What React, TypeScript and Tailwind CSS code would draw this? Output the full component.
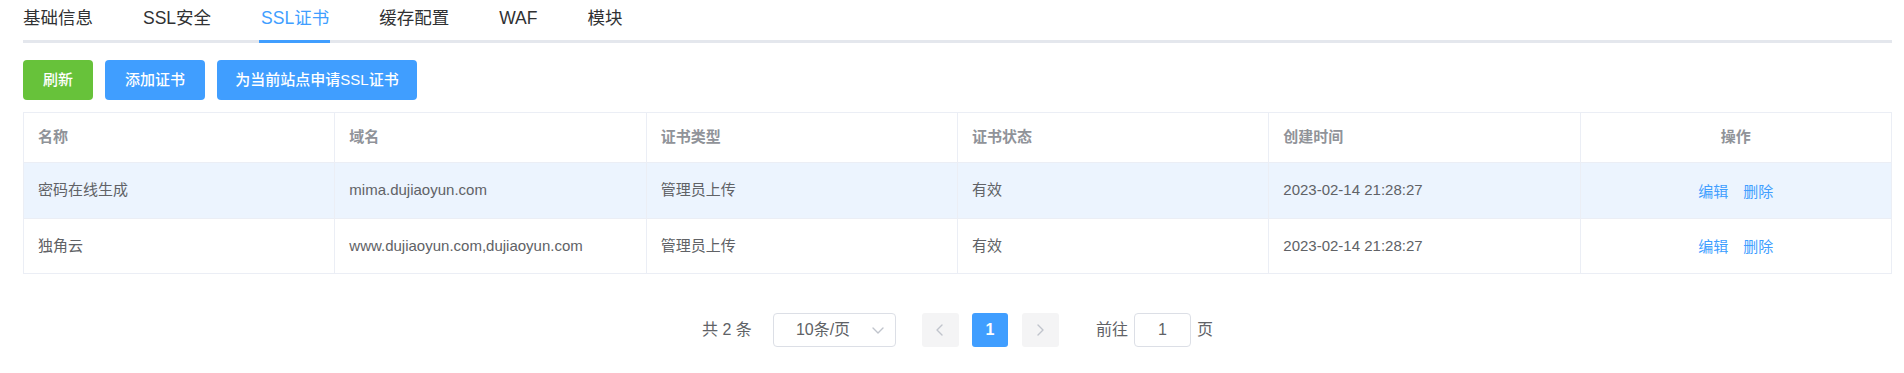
import React from "react";

const FONT = { fontFamily: '"Liberation Sans", Arial, "Noto Sans CJK SC", sans-serif' };

const tabs = ["基础信息", "SSL安全", "SSL证书", "缓存配置", "WAF", "模块"];

const rows = [
  { name: "密码在线生成", domain: "mima.dujiaoyun.com", type: "管理员上传", status: "有效", time: "2023-02-14 21:28:27", active: true },
  { name: "独角云", domain: "www.dujiaoyun.com,dujiaoyun.com", type: "管理员上传", status: "有效", time: "2023-02-14 21:28:27", active: false },
];

function Chevron({ dir }: { dir: "left" | "right" | "down" }) {
  const d =
    dir === "left" ? "M10 3 L5 8 L10 13" : dir === "right" ? "M6 3 L11 8 L6 13" : "M3 6 L8 11 L13 6";
  return (
    <svg width="16" height="16" viewBox="0 0 16 16" fill="none">
      <path d={d} stroke="#C0C4CC" strokeWidth="1.4" strokeLinecap="round" strokeLinejoin="round" />
    </svg>
  );
}

export default function App() {
  return (
    <div className="w-[1904px] h-[373px] bg-white pl-[23px] pr-[12px]" style={FONT}>
      {/* Tabs */}
      <div className="relative">
        <div className="flex h-[40px]">
          {tabs.map((t, i) => (
            <div
              key={t}
              className={`relative flex items-start pt-[7px] text-[17.5px] font-normal leading-[22px] ${
                i === 0 ? "pr-[25px]" : i === tabs.length - 1 ? "pl-[25px]" : "px-[25px]"
              } ${i === 2 ? "text-[#409EFF]" : "text-[#303133]"}`}
            >
              <span className="relative">
                {t}
                {i === 2 && <span className="absolute left-[-2px] right-[-1px] top-[33px] h-[3px] bg-[#409EFF] z-10" />}
              </span>
            </div>
          ))}
        </div>
        <div className="h-[3px] bg-[#E4E7ED]" />
      </div>

      {/* Buttons */}
      <div className="flex gap-[12px] mt-[17px]">
        <button className="h-[40px] w-[70px] rounded-[4px] bg-[#67C23A] text-white text-[15px] font-medium">刷新</button>
        <button className="h-[40px] w-[100px] rounded-[4px] bg-[#409EFF] text-white text-[15px] font-medium">添加证书</button>
        <button className="h-[40px] w-[200px] rounded-[4px] bg-[#409EFF] text-white text-[15px] font-medium">为当前站点申请SSL证书</button>
      </div>

      {/* Table */}
      <table className="mt-[12px] w-full table-fixed border-collapse border border-[#EBEEF5] text-[15px]">
        <thead>
          <tr className="h-[50px]">
            {["名称", "域名", "证书类型", "证书状态", "创建时间"].map((h) => (
              <th key={h} className="border border-[#EBEEF5] px-[14px] text-left font-bold text-[#909399]">
                {h}
              </th>
            ))}
            <th className="border border-[#EBEEF5] px-[14px] text-center font-bold text-[#909399]">操作</th>
          </tr>
        </thead>
        <tbody>
          {rows.map((r, idx) => (
            <tr key={r.name} className={`${idx === 0 ? "h-[56px] bg-[#ECF4FE]" : "h-[55px] bg-white"}`}>
              {[r.name, r.domain, r.type, r.status, r.time].map((c, j) => (
                <td key={j} className="border border-[#EBEEF5] px-[14px] text-[#606266]">
                  {c}
                </td>
              ))}
              <td className="border border-[#EBEEF5] px-[14px] text-center">
                <span className="inline-flex gap-[15px] pt-[3px] text-[#409EFF]">
                  <span>编辑</span>
                  <span>删除</span>
                </span>
              </td>
            </tr>
          ))}
        </tbody>
      </table>

      {/* Pagination */}
      <div className="mt-[39px] flex items-center justify-center text-[16px] text-[#606266]">
        <span className="mr-[21px]">共 2 条</span>
        <div className="mr-[26px] flex h-[34px] w-[123px] items-center justify-between rounded-[4px] border border-[#DCDFE6] pl-[22px] pr-[9px]">
          <span>10条/页</span>
          <Chevron dir="down" />
        </div>
        <div className="flex h-[34px] w-[37px] items-center justify-center rounded-[3px] bg-[#F4F4F5]">
          <Chevron dir="left" />
        </div>
        <div className="ml-[13px] flex h-[34px] w-[36px] items-center justify-center rounded-[3px] bg-[#409EFF] font-bold text-white">
          1
        </div>
        <div className="ml-[14px] flex h-[34px] w-[37px] items-center justify-center rounded-[3px] bg-[#F4F4F5]">
          <Chevron dir="right" />
        </div>
        <span className="ml-[37px]">前往</span>
        <div className="ml-[6px] flex h-[34px] w-[57px] items-center justify-center rounded-[4px] border border-[#DCDFE6]">
          1
        </div>
        <span className="ml-[6px]">页</span>
      </div>
    </div>
  );
}
